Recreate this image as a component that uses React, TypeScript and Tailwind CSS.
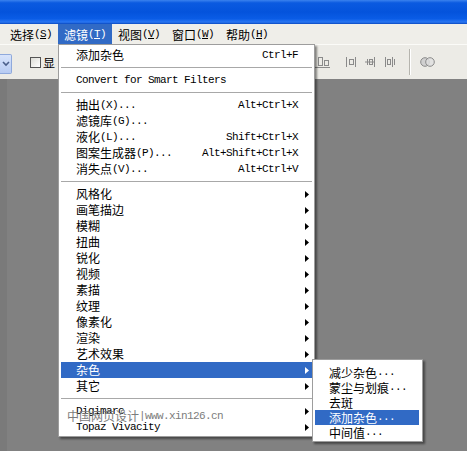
import React from 'react';

const cjkCls = "font-['Noto_Sans_CJK_SC','Noto_Sans',sans-serif] text-[12px]";
const monoCls = "font-['Liberation_Mono',monospace] text-[11px] tracking-[-0.6px]";

function Txt({ s }: { s: string }) {
  const parts = s.split(/([\u3000-\u9fff]+)/).filter(Boolean);
  return (
    <>
      {parts.map((p, i) =>
        /[\u3000-\u9fff]/.test(p) ? (
          <span key={i} className={cjkCls}>{p}</span>
        ) : (
          <span key={i} className={monoCls + ' whitespace-pre'}>{p}</span>
        )
      )}
    </>
  );
}

type Item =
  | { sep: true }
  | { sep?: false; label: string; shortcut?: string; arrow?: boolean; active?: boolean };

const mainItems: Item[] = [
  { label: '添加杂色', shortcut: 'Ctrl+F' },
  { sep: true },
  { label: 'Convert for Smart Filters' },
  { sep: true },
  { label: '抽出(X)...', shortcut: 'Alt+Ctrl+X' },
  { label: '滤镜库(G)...' },
  { label: '液化(L)...', shortcut: 'Shift+Ctrl+X' },
  { label: '图案生成器(P)...', shortcut: 'Alt+Shift+Ctrl+X' },
  { label: '消失点(V)...', shortcut: 'Alt+Ctrl+V' },
  { sep: true },
  { label: '风格化', arrow: true },
  { label: '画笔描边', arrow: true },
  { label: '模糊', arrow: true },
  { label: '扭曲', arrow: true },
  { label: '锐化', arrow: true },
  { label: '视频', arrow: true },
  { label: '素描', arrow: true },
  { label: '纹理', arrow: true },
  { label: '像素化', arrow: true },
  { label: '渲染', arrow: true },
  { label: '艺术效果', arrow: true },
  { label: '杂色', arrow: true, active: true },
  { label: '其它', arrow: true },
  { sep: true },
  { label: 'Digimarc', arrow: true },
  { label: 'Topaz Vivacity', arrow: true },
];

const subItems = [
  { label: '减少杂色...' },
  { label: '蒙尘与划痕...' },
  { label: '去斑' },
  { label: '添加杂色...', active: true },
  { label: '中间值...' },
];

function Arrow({ white }: { white?: boolean }) {
  return (
    <svg width="4" height="7" viewBox="0 0 4 7" className="mr-[3px]">
      <path d="M0 0 L4 3.5 L0 7 Z" fill={white ? '#ffffff' : '#000000'} />
    </svg>
  );
}

function MainMenu() {
  return (
    <div className="absolute left-[58px] top-[44px] w-[257px] bg-white border border-[#9d9d9d] pt-[2px] pb-[1px] shadow-[2px_2px_2px_rgba(0,0,0,0.45)]">
      {mainItems.map((it, i) =>
        it.sep ? (
          <div key={i} className="h-[9px] mx-[2px] flex items-center">
            <div className="h-px w-full bg-[#a8a8a8]" />
          </div>
        ) : (
          <div
            key={i}
            className={`h-[16px] mx-[2px] flex items-center pl-[15px] leading-[16px] ${
              it.active ? 'bg-[#316ac5] text-white' : 'text-black'
            }`}
          >
            <div className="flex-1 flex items-center">
              <Txt s={it.label} />
            </div>
            {it.shortcut && (
              <div className="mr-[14px] flex items-center">
                <Txt s={it.shortcut} />
              </div>
            )}
            {it.arrow && <Arrow white={it.active} />}
          </div>
        )
      )}
    </div>
  );
}

function SubMenu() {
  return (
    <div className="absolute left-[312px] top-[359px] w-[111px] bg-white border border-[#9d9d9d] pt-[5px] pb-[1px] shadow-[2px_2px_2px_rgba(0,0,0,0.45)]">
      {subItems.map((it, i) => (
        <div
          key={i}
          className={`h-[15px] ml-[2px] mr-[3px] flex items-center pl-[14px] leading-[15px] ${
            it.active ? 'bg-[#316ac5] text-white' : 'text-black'
          }`}
        >
          <Txt s={it.label} />
        </div>
      ))}
    </div>
  );
}

function MenuBar() {
  const items = [
    { a: '选择', k: 'S' },
    { a: '滤镜', k: 'T', active: true },
    { a: '视图', k: 'V' },
    { a: '窗口', k: 'W' },
    { a: '帮助', k: 'H' },
  ];
  return (
    <div className="h-[20px] bg-[#efeee9] flex items-stretch pl-[4px]">
      {items.map((it, i) => (
        <div
          key={i}
          className={`w-[54px] flex items-center pl-[6px] pt-[1px] ${
            it.active ? 'bg-[#316ac5] text-white' : 'text-black'
          }`}
        >
          <span className={cjkCls}>{it.a}</span>
          <span className={monoCls}>
            (<span className="underline underline-offset-[1px]">{it.k}</span>)
          </span>
        </div>
      ))}
    </div>
  );
}

function Toolbar() {
  const g = '#8a8a8a';
  return (
    <div className="h-[35px] bg-[#ecebe6] border-t border-[#fbfbf8] flex items-center">
      <div className="w-[12px] h-[20px] mt-[4px] bg-[linear-gradient(to_bottom,#d8e4fb,#b7cbf2)] border border-l-0 border-[#8fa9dc] rounded-r-[2px] flex items-center justify-center">
        <svg width="8" height="6" viewBox="0 0 8 6">
          <path d="M1 1 L4 4 L7 1" stroke="#4a5f8a" strokeWidth="1.6" fill="none" />
        </svg>
      </div>
      <div className="ml-[18px] w-[11px] h-[11px] border border-[#555] bg-[linear-gradient(135deg,#dcdcd6,#ffffff)]" />
      <div className="ml-[2px] w-[15px] overflow-hidden whitespace-nowrap">
        <span className={cjkCls + ' text-black'}>显</span>
      </div>
      <div className="ml-auto pr-[32px] flex items-center">
        <svg width="15" height="12" viewBox="0 0 15 12">
          <rect x="3.5" y="1.5" width="4" height="8" fill="none" stroke={g} />
          <rect x="9.5" y="4.5" width="4" height="5" fill="none" stroke={g} />
          <path d="M0 11.5 H15" stroke={g} />
        </svg>
        <svg width="12" height="12" viewBox="0 0 12 12" className="ml-[15px]">
          <path d="M1.5 1 V11" stroke={g} />
          <rect x="4.5" y="3.5" width="4" height="5" fill="none" stroke={g} />
          <path d="M10.5 1 V11" stroke={g} />
        </svg>
        <svg width="12" height="12" viewBox="0 0 12 12" className="ml-[7px]">
          <path d="M1 6 H11" stroke={g} />
          <path d="M3.5 3 V9" stroke={g} />
          <rect x="5.5" y="3.5" width="3" height="5" fill="none" stroke={g} />
          <path d="M10.5 1 V11" stroke={g} />
        </svg>
        <svg width="12" height="12" viewBox="0 0 12 12" className="ml-[8px]">
          <path d="M1.5 1 V11" stroke={g} />
          <rect x="3.5" y="3.5" width="3" height="5" fill="none" stroke={g} />
          <path d="M8.5 1 V11" stroke={g} />
          <path d="M10.5 3 V9" stroke={g} />
        </svg>
        <div className="ml-[13px] h-[26px] w-[2px] border-l border-[#b5b4ae] border-r border-r-white" />
        <svg width="15" height="12" viewBox="0 0 15 12" className="ml-[9px]">
          <circle cx="5" cy="6" r="4.3" fill="#d0d0d0" stroke={g} />
          <circle cx="10" cy="6" r="4.3" fill="#e0e0e0" stroke={g} fillOpacity="0.8" />
        </svg>
      </div>
    </div>
  );
}

export default function App() {
  return (
    <div className="relative w-[467px] h-[451px] overflow-hidden flex flex-col bg-[#808080]">
      <div className="h-[24px] shrink-0 bg-[linear-gradient(to_bottom,#3b82ee_0%,#0b5ae0_12%,#0453dc_50%,#0a5ce6_78%,#2a76f2_92%,#0848c0_100%)]" />
      <MenuBar />
      <Toolbar />
      <div className="flex-1 flex">
        <div className="w-[7px] bg-[#7a7a7a]" />
        <div className="flex-1 bg-[#818181]" />
      </div>
      <MainMenu />
      <SubMenu />
      <div className="absolute left-[67px] top-[408px] h-[16px] flex items-center text-[#7c7c7c] pointer-events-none">
        <span className="font-['Noto_Sans_CJK_SC',sans-serif] text-[12px]">中国网页设计</span>
        <span className={monoCls}>|www.xin126.cn</span>
      </div>
    </div>
  );
}
